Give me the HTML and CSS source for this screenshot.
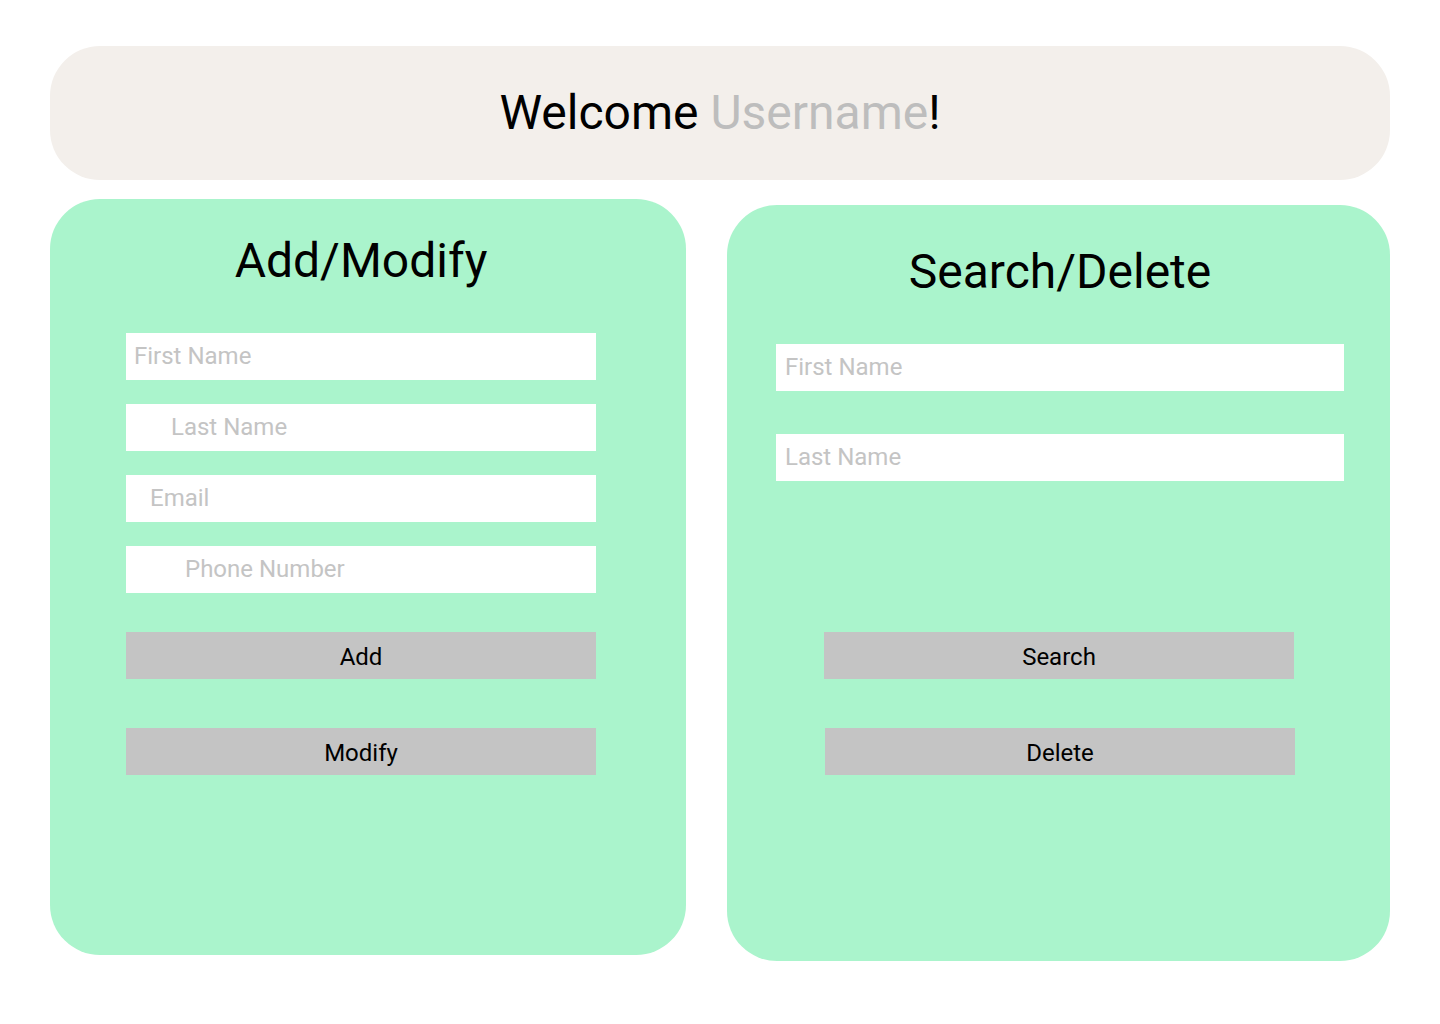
FILE: index.html
```html
<!DOCTYPE html>
<html lang="en">
<head>
<meta charset="utf-8">
<title>Welcome</title>
<link rel="stylesheet" href="styles.css">
</head>
<body>
<div class="page">
  <header class="welcome">
    <h1 class="welcome-text">Welcome <span class="username">Username</span>!</h1>
  </header>
  <main class="panels">
    <section class="panel panel-add">
      <h2 class="panel-title">Add/Modify</h2>
      <div class="fields fields-add">
        <div class="field indent-8">First Name</div>
        <div class="field indent-45">Last Name</div>
        <div class="field indent-24">Email</div>
        <div class="field indent-59">Phone Number</div>
      </div>
      <div class="actions actions-add">
        <button class="btn">Add</button>
        <button class="btn">Modify</button>
      </div>
    </section>
    <section class="panel panel-search">
      <h2 class="panel-title">Search/Delete</h2>
      <div class="fields fields-search">
        <div class="field wide indent-9">First Name</div>
        <div class="field wide indent-9">Last Name</div>
      </div>
      <div class="actions actions-search">
        <button class="btn">Search</button>
        <button class="btn btn-shift">Delete</button>
      </div>
    </section>
  </main>
</div>
</body>
</html>
```
FILE: styles.css
```css
* { box-sizing: border-box; }
html, body { margin: 0; padding: 0; background: #ffffff; }
body { font-family: Roboto, "Liberation Sans", Arial, sans-serif; color: #000; }

.page {
  padding: 46px 50px 0 50px;
  width: 1440px;
}

.welcome {
  height: 134px;
  background: #f3efeb;
  border-radius: 50px;
  display: flex;
  align-items: center;
  justify-content: center;
}
.welcome-text {
  margin: 0;
  font-size: 48px;
  line-height: 56px;
  font-weight: 400;
}
.username { color: #bdbdbd; }

.panels {
  display: flex;
  align-items: flex-start;
  gap: 41px;
  margin-top: 19px;
}

.panel {
  background: #aaf4cc;
  border-radius: 50px;
  height: 756px;
  display: flex;
  flex-direction: column;
}
.panel-add {
  width: 636px;
  padding: 34px 90px 0 76px;
}
.panel-search {
  width: 663px;
  margin-top: 6px;
  padding: 39px 46px 0 49px;
}

.panel-title {
  margin: 0;
  font-size: 48px;
  line-height: 56px;
  font-weight: 400;
  text-align: center;
}

.fields {
  display: flex;
  flex-direction: column;
}
.fields-add { margin-top: 44px; gap: 24px; width: 470px; }
.fields-search { margin-top: 44px; gap: 43px; width: 568px; }

.field {
  height: 47px;
  background: #ffffff;
  color: #c4c4c4;
  font-size: 24px;
  line-height: 47px;
  white-space: nowrap;
}
.indent-8 { padding-left: 8px; }
.indent-9 { padding-left: 9px; }
.indent-24 { padding-left: 24px; }
.indent-45 { padding-left: 45px; }
.indent-59 { padding-left: 59px; }

.actions {
  display: flex;
  flex-direction: column;
  gap: 49px;
}
.actions-add { margin-top: 39px; width: 470px; }
.actions-search { margin-top: 151px; width: 470px; margin-left: 48px; }

.btn {
  display: block;
  width: 470px;
  height: 47px;
  border: none;
  padding: 4px 0 0 0;
  margin: 0;
  background: #c4c4c4;
  color: #000;
  font-family: Roboto, "Liberation Sans", Arial, sans-serif;
  font-size: 24px;
  line-height: 43px;
  text-align: center;
  cursor: pointer;
}
.btn-shift { margin-left: 1px; }
```
